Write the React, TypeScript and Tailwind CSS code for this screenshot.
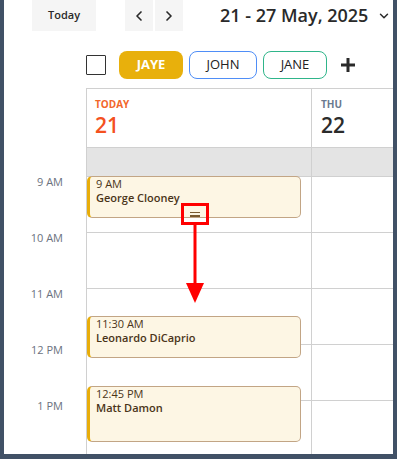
import { ChevronDown, ChevronLeft, ChevronRight } from "lucide-react";

const font = { fontFamily: "'Open Sans', Lato, sans-serif" };

const hours = ["9 AM", "10 AM", "11 AM", "12 PM", "1 PM"];

type Ev = { time: string; name: string; top: number; height: number };

const events: Ev[] = [
  { time: "9 AM", name: "George Clooney", top: 0, height: 42 },
  { time: "11:30 AM", name: "Leonardo DiCaprio", top: 140, height: 42 },
  { time: "12:45 PM", name: "Matt Damon", top: 210, height: 56 },
];

const EventCard = ({ ev }: { ev: Ev }) => (
  <div
    className="absolute left-0 w-[214px] rounded-[5px] border border-l-[3px] border-[#c2a585] border-l-[#e8ad0a] bg-[#fdf6e4] pl-[6px] text-[11px] leading-[13.5px] text-[#4a3418]"
    style={{ top: ev.top, height: ev.height }}
  >
    <div>{ev.time}</div>
    <div className="font-semibold">{ev.name}</div>
  </div>
);

export default function App() {
  return (
    <div className="h-[459px] w-[397px] bg-[#415166] pb-[5px] pl-[4px] pr-[4px]" style={font}>
      <div className="flex h-full w-full flex-col overflow-hidden bg-white">
        {/* toolbar */}
        <div className="flex h-[31px] shrink-0 items-center text-[#2a2a2a]">
          <button className="ml-[28px] flex h-full w-[64px] items-center justify-center bg-[#f5f5f5] text-[11px] font-semibold">
            Today
          </button>
          <button className="ml-[29px] flex h-full w-[28px] items-center justify-center bg-[#f5f5f5]">
            <ChevronLeft size={16} strokeWidth={2.5} />
          </button>
          <button className="ml-[2px] flex h-full w-[28px] items-center justify-center bg-[#f5f5f5]">
            <ChevronRight size={16} strokeWidth={2.5} />
          </button>
          <div className="ml-[37px] whitespace-nowrap text-[18px] font-semibold">21 - 27 May, 2025</div>
          <ChevronDown size={14} strokeWidth={2.5} className="ml-auto mr-[2px] shrink-0" />
        </div>

        {/* people */}
        <div className="mt-[20px] flex h-[28px] shrink-0 items-center">
          <div className="ml-[82px] h-[20px] w-[20px] rounded-[1px] border-[1.5px] border-[#333]" />
          <div className="ml-[13px] flex h-full w-[64px] items-center justify-center rounded-[8px] bg-[#e8b00c] text-[13px] font-bold text-white">
            JAYE
          </div>
          <div className="ml-[6px] flex h-full w-[68px] items-center justify-center rounded-[8px] border border-[#4f8ef7] text-[13px] font-medium text-[#222]">
            JOHN
          </div>
          <div className="ml-[6px] flex h-full w-[64px] items-center justify-center rounded-[8px] border border-[#2fb58a] text-[13px] font-medium text-[#222]">
            JANE
          </div>
          <svg className="ml-[13px]" width="16" height="16" viewBox="0 0 16 16">
            <path d="M8 1v14M1 8h14" stroke="#2a2a2a" strokeWidth="3" />
          </svg>
        </div>

        {/* grid */}
        <div className="mt-[9px] flex flex-1">
          <div className="w-[82px] shrink-0">
            <div className="h-[88px]" />
            {hours.map((h) => (
              <div key={h} className="h-[56px] pr-[23px] text-right text-[11px] leading-[12px] text-[#6b7280]">
                {h}
              </div>
            ))}
          </div>

          <div className="w-[225px] shrink-0 border-l border-[#d0d0d0]">
            <div className="h-[60px] border-y border-[#d0d0d0] pl-[8px] pt-[9px]">
              <div className="text-[10px] font-bold leading-[12px] text-[#f2662b]">TODAY</div>
              <div className="mt-[3px] text-[21px] font-semibold leading-[24px] text-[#f4511e]">21</div>
            </div>
            <div className="h-[28px] bg-[#e4e4e4]" />
            <div className="relative">
              {hours.map((h) => (
                <div key={h} className="h-[56px] border-t border-[#d0d0d0]" />
              ))}
              {events.map((ev) => (
                <EventCard key={ev.time} ev={ev} />
              ))}
              {/* drag handle + arrow */}
              <div className="absolute left-[94px] top-[27px] flex h-[22px] w-[28px] flex-col items-center justify-center gap-[2px] border-[3px] border-[#ff0000]">
                <div className="h-[1.5px] w-[10px] bg-[#7a5a30]" />
                <div className="h-[1.5px] w-[10px] bg-[#7a5a30]" />
              </div>
              <svg className="absolute left-[98px] top-[49px]" width="20" height="80" viewBox="0 0 20 80">
                <path d="M10 0v60" stroke="#ff0000" strokeWidth="3" />
                <path d="M1 58h18L10 78z" fill="#ff0000" />
              </svg>
            </div>
          </div>

          <div className="flex-1 border-l border-[#d0d0d0]">
            <div className="h-[60px] border-y border-[#d0d0d0] pl-[9px] pt-[9px]">
              <div className="text-[10px] font-bold leading-[12px] text-[#6b7a90]">THU</div>
              <div className="mt-[3px] text-[21px] font-semibold leading-[24px] text-[#2b2b2b]">22</div>
            </div>
            <div className="h-[28px] bg-[#e4e4e4]" />
            {hours.map((h) => (
              <div key={h} className="h-[56px] border-t border-[#d0d0d0]" />
            ))}
          </div>
        </div>
      </div>
    </div>
  );
}
